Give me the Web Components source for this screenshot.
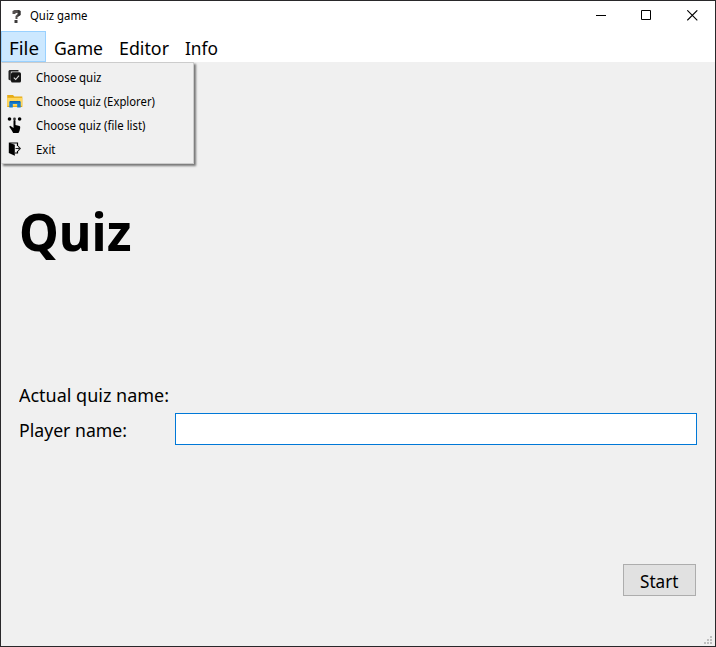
<!DOCTYPE html>
<html lang="en"><head><meta charset="utf-8"><title>Quiz game</title>
<style>html,body{margin:0;height:100%;overflow:hidden;font-family:"Noto Sans","Open Sans",sans-serif;color:#000}</style></head>
<body><quiz-window></quiz-window>
<script>
const define=(name,html,after)=>{
  const t=document.createElement('template');t.innerHTML=html;
  customElements.define(name,class extends HTMLElement{
    constructor(){super();this.attachShadow({mode:'open'}).append(t.content.cloneNode(true));}
    connectedCallback(){if(after)after(this);}
  });
};
/* A label condensed horizontally to the width given in its "w" attribute. */
define('fit-text',`<style>:host{display:block;white-space:nowrap}span{display:inline-block;transform-origin:0 50%}</style><span><slot></slot></span>`,el=>{
  const s=el.shadowRoot.querySelector('span'),w=+el.getAttribute('w');
  el.style.width=w+'px';
  const fit=()=>{const n=s.offsetWidth&&parseFloat(getComputedStyle(s).width);if(n)s.style.transform='scaleX('+w/n+')';};
  fit();document.fonts.ready.then(fit);
});
define('title-bar',`<style>
:host{display:flex;height:30px;background:#fff;align-items:center;font-size:11.7px;line-height:28px}
.q{width:11px;height:15px;margin:0 8px 0 10px}fit-text{flex:1;height:30px}
.c{display:flex}.c svg{width:11px;height:11px;padding:9px 17px 10px;display:block}
</style><svg class="q" viewBox="0 0 10 15"><path d="M1 4V2l2-1h4l2 1v4L6 8v2H4V7l2-2V4H4v1H1z" fill="#55504f"/><path d="M6 1h1l2 1v4L6 8V7l1-2z" fill="#333"/><path d="M3 11h3v3H3z" fill="#3c3a3a"/></svg>
<fit-text w="57.5">Quiz game</fit-text>
<div class="c"><svg viewBox="0 0 11 11"><path d="M0 5.5h10" stroke="#000"/></svg><svg viewBox="0 0 11 11"><path d="M.5.5h9v9h-9z" fill="none" stroke="#000"/></svg><svg viewBox="0 0 11 11" style="padding:9px 17px 10px 18px"><path d="M.3.3l10 10M10.3.3l-10 10" stroke="#000" stroke-width="1.1"/></svg></div>`);
define('menu-bar',`<style>:host{display:flex;height:31px;background:#fff;position:relative;font-size:18.4px}</style><slot></slot>`);
define('menu-entry',`<style>:host{display:block;box-sizing:border-box;height:31px;padding:1px 8px 0;line-height:31px}
:host([open]){background:#cce8ff;border:1px solid #99d1ff;padding:0 7px 0;width:45px}</style><slot></slot>`);
define('drop-menu',`<style>:host{position:absolute;z-index:2;left:0;top:31px;width:193px;height:102px;box-sizing:border-box;background:#f0f0f0;border:1px solid #ccc;border-left-color:#ddd;padding:2px 1px;box-shadow:2px 2px 2px #777;font-size:11.9px;clip-path:inset(0 -6px -6px 0)}
</style><slot></slot>`);
define('menu-item',`<style>:host{display:flex;height:24px;line-height:24px;align-items:center}
::slotted(svg){width:16px;height:16px;margin:0 13px 0 4px;flex:none}</style><slot name="icon"></slot><slot></slot>`);
define('push-button',`<style>:host{display:flex;box-sizing:border-box;width:73px;height:32px;border:1px solid #adadad;background:#e1e1e1;padding:0 0 0 16px;line-height:31px}</style><slot></slot>`);
define('text-field',`<style>:host{display:block}input{display:block;box-sizing:border-box;width:100%;height:32px;border:1px solid #0078d7;background:#fff;outline:0;padding:0 4px;border-radius:0;font:18px "Noto Sans",sans-serif}</style><input aria-label="Player name">`);
define('size-grip',`<style>:host{display:block;width:10px;height:10px}svg{display:block}</style><svg width="10" height="10" fill="#bfbfbf"><path d="M6 0h2v2H6zM3 3h2v2H3zM6 3h2v2H6zM0 6h2v2H0zM3 6h2v2H3zM6 6h2v2H6z"/></svg>`);
define('quiz-form',`<style>
:host{display:flex;flex-direction:column;flex:1;padding:0 18px 0;font-size:18.4px}
.h{font-size:52.5px;font-weight:700;line-height:72px;margin-top:133px}
.f{display:grid;grid-template-columns:150px 1fr;column-gap:6px;margin-top:111px;grid-template-rows:32px 32px;line-height:32px}
.f fit-text{padding-top:1px}.f text-field{grid-column:2;grid-row:2;margin-top:3px}
.f .p{grid-row:2;padding-top:4px}
.a{display:flex;justify-content:flex-end;margin-top:122px;padding-right:1px}
.g{display:flex;justify-content:flex-end;margin:auto -17px 0 0}
</style><fit-text class="h" w="112.5">Quiz</fit-text>
<div class="f"><fit-text w="150">Actual quiz name:</fit-text><fit-text class="p" w="108">Player name:</fit-text><text-field></text-field></div>
<div class="a"><push-button><fit-text w="38.5">Start</fit-text></push-button></div>
<div class="g"><size-grip></size-grip></div>`);
define('quiz-window',`<style>:host{display:flex;flex-direction:column;box-sizing:border-box;width:716px;height:647px;border:1px solid #29282a;background:#f0f0f0}</style>
<title-bar></title-bar>
<menu-bar>
<menu-entry open><fit-text w="30">File</fit-text></menu-entry><menu-entry><fit-text w="49">Game</fit-text></menu-entry><menu-entry><fit-text w="50">Editor</fit-text></menu-entry><menu-entry><fit-text w="33">Info</fit-text></menu-entry>
<drop-menu>
<menu-item><svg slot="icon" viewBox="0 0 16 16"><path d="M2.5 1h9v1.5H3.8v9.3L1.5 10.5V2z" fill="#222"/><rect x="4" y="3.3" width="10" height="10.2" rx="1.5" fill="#161616"/><path d="M6.8 8.6l1.9 1.9L12 6.7" fill="none" stroke="#ddd" stroke-width="1.1"/></svg><fit-text w="65.5">Choose quiz</fit-text></menu-item>
<menu-item><svg slot="icon" viewBox="0 0 16 16"><path d="M.2 2h5.8l1.3 1.5h8v10.5H.2z" fill="#e6ac16"/><path d="M.2 4.8h15.1v8H.2z" fill="#ffd75e"/><path d="M2.3 14.5V9l1-1h9.4l1 1v5.5h-3.5V11H5.8v3.5z" fill="#177ed0"/><path d="M2.8 8h10.4v1.5H2.8z" fill="#0d62ae"/></svg><fit-text w="119">Choose quiz (Explorer)</fit-text></menu-item>
<menu-item><svg slot="icon" viewBox="0 0 16 16"><circle cx="2.5" cy="2" r="1.8"/><circle cx="7.5" cy="2" r="1.4" fill="#333"/><circle cx="12.6" cy="2" r="1.8"/><path d="M6.5 3.5q1-1 2 0V8l4 1q1 .3.7 2l-.7 3-1 2H6.2L4.5 13 2.2 9.8l1-1L6.5 11z"/></svg><fit-text w="109.5">Choose quiz (file list)</fit-text></menu-item>
<menu-item><svg slot="icon" viewBox="0 0 16 16"><path d="M1.8 1.5l6 2.3v11l-6-2.8z"/><path d="M2.5 2h8v3M10.5 10v2H8" fill="none" stroke="#000" stroke-width="1.2"/><path d="M8.5 7.5h4M11 5.2l2.3 2.3L11 9.8" fill="none" stroke="#222" stroke-width="1.1"/></svg><fit-text w="19.5">Exit</fit-text></menu-item>
</drop-menu></menu-bar>
<quiz-form></quiz-form>`);
</script></body></html>
